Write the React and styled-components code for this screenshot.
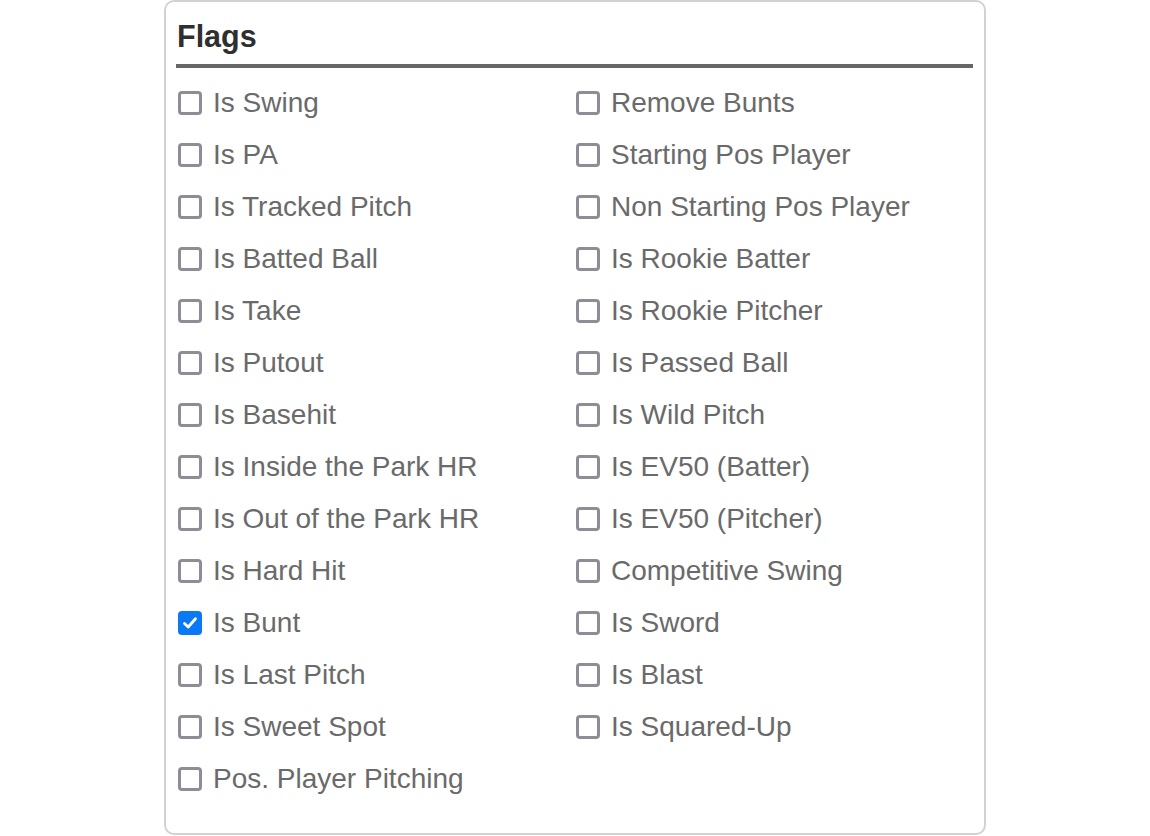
import styled, { createGlobalStyle } from "styled-components";

const GlobalStyle = createGlobalStyle`
    body {
        margin: 0;
        background: #ffffff;
        font-family: "Liberation Sans", Arial, sans-serif;
    }
`;

const Page = styled.div`
    display: flex;
    padding-left: 164px;
`;

const Card = styled.section`
    width: 797px;
    padding: 14px 11px 28px 10px;
    border: 2px solid #d2d2d2;
    border-radius: 10px;
    background: #ffffff;
`;

const Title = styled.h2`
    margin: 0 0 9px 0;
    padding: 2px 0 10px 1px;
    font-size: 30.5px;
    line-height: 36px;
    font-weight: 700;
    color: #2f2f2f;
    border-bottom: 4px solid #666666;
`;

const Columns = styled.div`
    display: grid;
    grid-template-columns: 398px 398px;
`;

const Column = styled.div`
    display: flex;
    flex-direction: column;
`;

const Row = styled.label`
    display: flex;
    align-items: center;
    gap: 11px;
    height: 52px;
    padding-left: 2px;
    font-size: 28px;
    color: #6a6a6a;
    cursor: pointer;
`;

const Box = styled.span`
    box-sizing: border-box;
    width: 24px;
    height: 24px;
    flex: none;
    display: flex;
    align-items: center;
    justify-content: center;
    border-radius: 4px;
    border: ${(p) => (p.$checked ? "none" : "3px solid #8e8d97")};
    background: ${(p) => (p.$checked ? "#0b78f5" : "#ffffff")};
`;

const left = [
    "Is Swing",
    "Is PA",
    "Is Tracked Pitch",
    "Is Batted Ball",
    "Is Take",
    "Is Putout",
    "Is Basehit",
    "Is Inside the Park HR",
    "Is Out of the Park HR",
    "Is Hard Hit",
    "Is Bunt",
    "Is Last Pitch",
    "Is Sweet Spot",
    "Pos. Player Pitching",
];

const right = [
    "Remove Bunts",
    "Starting Pos Player",
    "Non Starting Pos Player",
    "Is Rookie Batter",
    "Is Rookie Pitcher",
    "Is Passed Ball",
    "Is Wild Pitch",
    "Is EV50 (Batter)",
    "Is EV50 (Pitcher)",
    "Competitive Swing",
    "Is Sword",
    "Is Blast",
    "Is Squared-Up",
];

const Flag = ({ label, checked }) => (
    <Row>
        <Box $checked={checked}>
            {checked && (
                <svg width="18" height="18" viewBox="0 0 18 18">
                    <path d="M3.5 9.5 L7.2 13 L14.5 4.8" fill="none" stroke="#fff" strokeWidth="2.8" strokeLinecap="round" strokeLinejoin="round" />
                </svg>
            )}
        </Box>
        {label}
    </Row>
);

const App = () => {
    return (
        <Page>
            <GlobalStyle />
            <Card>
                <Title>Flags</Title>
                <Columns>
                    <Column>
                        {left.map((l) => (
                            <Flag key={l} label={l} checked={l === "Is Bunt"} />
                        ))}
                    </Column>
                    <Column>
                        {right.map((l) => (
                            <Flag key={l} label={l} />
                        ))}
                    </Column>
                </Columns>
            </Card>
        </Page>
    );
};

export default App;
